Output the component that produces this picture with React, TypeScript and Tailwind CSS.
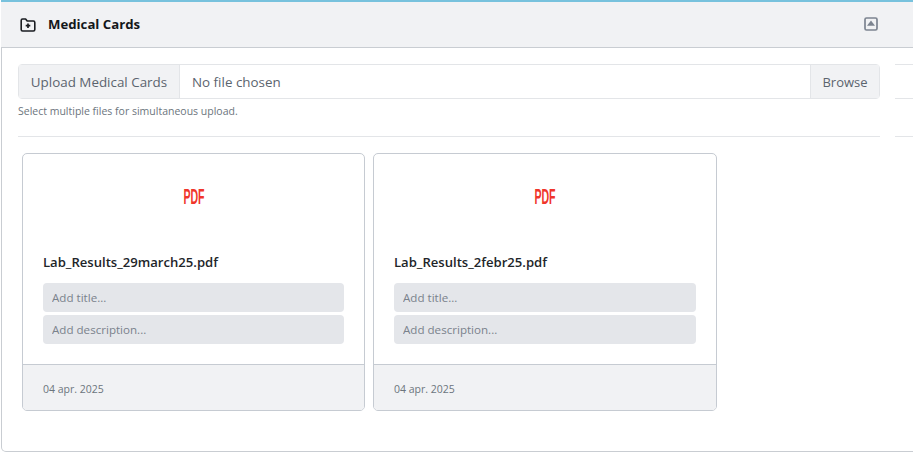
import { useId } from "react"

function FolderPlus() {
  return (
    <svg width="16" height="16" viewBox="0 0 16 16" fill="none" stroke="#1a1d21" strokeWidth="1.6" strokeLinejoin="round">
      <path d="M1.2 3.4c0-.8.6-1.4 1.4-1.4h3l1.6 2h6.2c.8 0 1.4.6 1.4 1.4v7.2c0 .8-.6 1.4-1.4 1.4H2.6c-.8 0-1.4-.6-1.4-1.4z" />
      <path d="M8 6.4v4.6M5.7 8.7h4.6" strokeWidth="1.7" />
    </svg>
  )
}

function CollapseIcon() {
  return (
    <svg width="14" height="14" viewBox="0 0 14 14" fill="none">
      <rect x="1" y="1" width="12" height="12" rx="1.5" stroke="#7c8490" strokeWidth="1.7" fill="#f1f2f4" />
      <path d="M7 3.6 11 8.8H3z" fill="#7c8490" />
    </svg>
  )
}

function FileCard({ name, date, width }: { name: string; date: string; width: string }) {
  const id = useId()

  return (
    <div className={`${width} h-[258px] flex flex-col rounded-[5px] border border-[#c6cbd2] overflow-hidden bg-white`}>
      <div className="flex-1 px-5">
        <div className="h-[83px] pt-[32px] flex justify-center">
          <span className="font-['Liberation_Sans',sans-serif] font-bold text-[22px] leading-[22px] text-[#f0352b] scale-x-[0.48]">PDF</span>
        </div>
        <div className="mt-[15px] text-[13.1px] leading-[20px] font-semibold text-[#212529]">{name}</div>
        <div className="mt-[11px] flex flex-col gap-[3px]">
          <input id={`${id}-title`} placeholder="Add title..." className="h-[29px] w-full rounded bg-[#e4e6ea] px-[9px] text-[11.6px] outline-none placeholder:text-[#7a828c]" />
          <input id={`${id}-desc`} placeholder="Add description..." className="h-[29px] w-full rounded bg-[#e4e6ea] px-[9px] text-[11.6px] outline-none placeholder:text-[#7a828c]" />
        </div>
      </div>
      <div className="h-[46px] flex items-center pt-[5px] px-5 border-t border-[#c6cbd2] bg-[#f1f2f4] text-[10.5px] text-[#6c757d]">{date}</div>
    </div>
  )
}

export default function App() {
  return (
    <div className="w-[913px] h-[452px] overflow-hidden bg-white font-['Open_Sans',sans-serif]">
      <div className="w-[940px] h-[452px] flex flex-col rounded-b-[5px] border-x border-b border-[#c9cdd2] ml-px">
        <div className="h-[48px] flex items-center bg-[#f1f2f4] border-t-2 border-t-[#78c2dd] border-b border-b-[#c9cdd2] -ml-px pl-[19px] w-[913px]">
          <FolderPlus />
          <span className="ml-[12px] pt-px text-[13.2px] font-bold text-[#14171a]">Medical Cards</span>
          <span className="ml-auto mr-9 mb-px"><CollapseIcon /></span>
        </div>
        <div className="flex-1 flex pt-4 pl-[16px]">
          <div className="w-[862px] shrink-0">
            <div className="h-[35px] flex rounded border border-[#e3e5e8] text-[13.4px] text-[#5b646e]">
              <div className="w-[161px] flex items-center justify-center pt-px bg-[#f1f2f4] border-r border-[#e3e5e8]">Upload Medical Cards</div>
              <div className="flex-1 flex items-center pt-px px-3">No file chosen</div>
              <div className="w-[69px] flex items-center justify-center pt-[2px] bg-[#f1f2f4] border-l border-[#e3e5e8] text-[13px]">Browse</div>
            </div>
            <p className="mt-1 text-[10.5px] leading-4 text-[#6c757d]">Select multiple files for simultaneous upload.</p>
            <div className="mt-[17px] border-t border-[#e3e5e8]" />
            <div className="mt-4 ml-1 flex gap-2">
              <FileCard name="Lab_Results_29march25.pdf" date="04 apr. 2025" width="w-[343px]" />
              <FileCard name="Lab_Results_2febr25.pdf" date="04 apr. 2025" width="w-[344px]" />
            </div>
          </div>
          <div className="ml-[15px] flex-1">
            <div className="h-[35px] border-y border-[#e3e5e8]" />
            <div className="mt-[37px] border-t border-[#e3e5e8]" />
          </div>
        </div>
      </div>
    </div>
  )
}
